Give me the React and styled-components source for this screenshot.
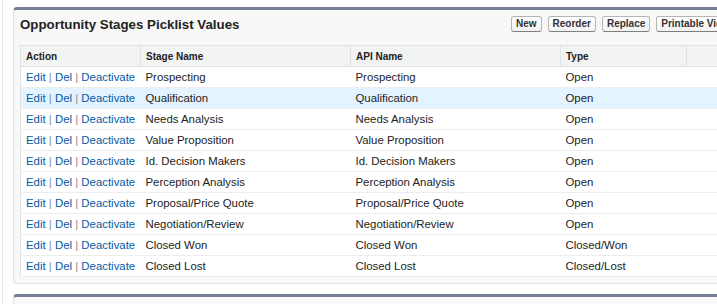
import React from 'react'
import styled, { createGlobalStyle } from 'styled-components'

const GlobalStyle = createGlobalStyle`
    html, body {
        margin: 0;
        padding: 0;
        background: #fff;
        overflow: hidden;
    }
    body {
        font-family: 'Liberation Sans', Arial, sans-serif;
        color: #222;
    }
`

const Page = styled.div`
    margin-left: 2px;
    border-left: 1px solid #e2e2e2;
    padding: 7px 0 0 10px;
    height: 297px;
    overflow: hidden;
`

const Panel = styled.section`
    width: 780px;
    background: #f8f8f8;
    border: 1px solid #e0e0e0;
    border-top: 3px solid #747e96;
    border-radius: 4px;
    padding: 0 6px 6px;
    margin-bottom: ${p => p.$gap || 0}px;
`

const PanelHeader = styled.div`
    display: grid;
    grid-template-columns: 491px auto;
    align-items: start;
    height: 35px;
    padding-top: 6px;
    box-sizing: border-box;
`

const Title = styled.h2`
    margin: 0;
    font-size: 13.3px;
    line-height: 17px;
    font-weight: bold;
    color: #222;
    white-space: nowrap;
`

const Buttons = styled.div`
    display: flex;
    gap: 6px;
    white-space: nowrap;
`

const Button = styled.button`
    height: 16px;
    padding: 0 4px;
    font-family: 'Liberation Sans', Arial, sans-serif;
    font-size: 10px;
    font-weight: bold;
    color: #333;
    background: linear-gradient(#fff, #f2f2f2);
    border: 1px solid #b5b5b5;
    border-bottom-color: #7f7f7f;
    border-radius: 3px;
    line-height: 14px;
`

const Table = styled.table`
    border-collapse: collapse;
    width: 100%;
    background: #fff;
    border: 1px solid #e0e3e5;
    table-layout: fixed;
`

const Th = styled.th`
    height: 20px;
    padding: 0 5px;
    background: #f2f3f3;
    border: 1px solid #e0e3e5;
    font-size: 10px;
    font-weight: bold;
    color: #222;
    text-align: left;
`

const Tr = styled.tr`
    background: ${p => (p.$hl ? '#e3f3ff' : '#fff')};
`

const Td = styled.td`
    height: 20px;
    padding: 0 5px;
    border-bottom: 1px solid #ededed;
    font-size: 11.4px;
    color: #222;
    white-space: nowrap;
    overflow: hidden;
`

const Link = styled.a`
    color: #015ba7;
    text-decoration: none;
`

const Sep = styled.span`
    color: #8c8c8c;
`

const stages = [
    ['Prospecting', 'Open'],
    ['Qualification', 'Open'],
    ['Needs Analysis', 'Open'],
    ['Value Proposition', 'Open'],
    ['Id. Decision Makers', 'Open'],
    ['Perception Analysis', 'Open'],
    ['Proposal/Price Quote', 'Open'],
    ['Negotiation/Review', 'Open'],
    ['Closed Won', 'Closed/Won'],
    ['Closed Lost', 'Closed/Lost'],
]

function Actions() {
    return (
        <>
            <Link href="#">Edit</Link> <Sep>|</Sep> <Link href="#">Del</Link> <Sep>|</Sep>{' '}
            <Link href="#">Deactivate</Link>
        </>
    )
}

export default function App() {
    return (
        <>
            <GlobalStyle />
            <Page>
                <Panel $gap={10}>
                    <PanelHeader>
                        <Title>Opportunity Stages Picklist Values</Title>
                        <Buttons>
                            <Button>New</Button>
                            <Button>Reorder</Button>
                            <Button>Replace</Button>
                            <Button>Printable View</Button>
                        </Buttons>
                    </PanelHeader>
                    <Table>
                        <colgroup>
                            <col style={{ width: 120 }} />
                            <col style={{ width: 210 }} />
                            <col style={{ width: 210 }} />
                            <col style={{ width: 126 }} />
                            <col />
                        </colgroup>
                        <thead>
                            <tr>
                                <Th>Action</Th>
                                <Th>Stage Name</Th>
                                <Th>API Name</Th>
                                <Th>Type</Th>
                                <Th></Th>
                            </tr>
                        </thead>
                        <tbody>
                            {stages.map(([name, type], i) => (
                                <Tr key={name} $hl={i === 1}>
                                    <Td><Actions /></Td>
                                    <Td>{name}</Td>
                                    <Td>{name}</Td>
                                    <Td>{type}</Td>
                                    <Td></Td>
                                </Tr>
                            ))}
                        </tbody>
                    </Table>
                </Panel>
                <Panel>
                    <PanelHeader>
                        <Title>Inactive Values</Title>
                    </PanelHeader>
                </Panel>
            </Page>
        </>
    )
}
